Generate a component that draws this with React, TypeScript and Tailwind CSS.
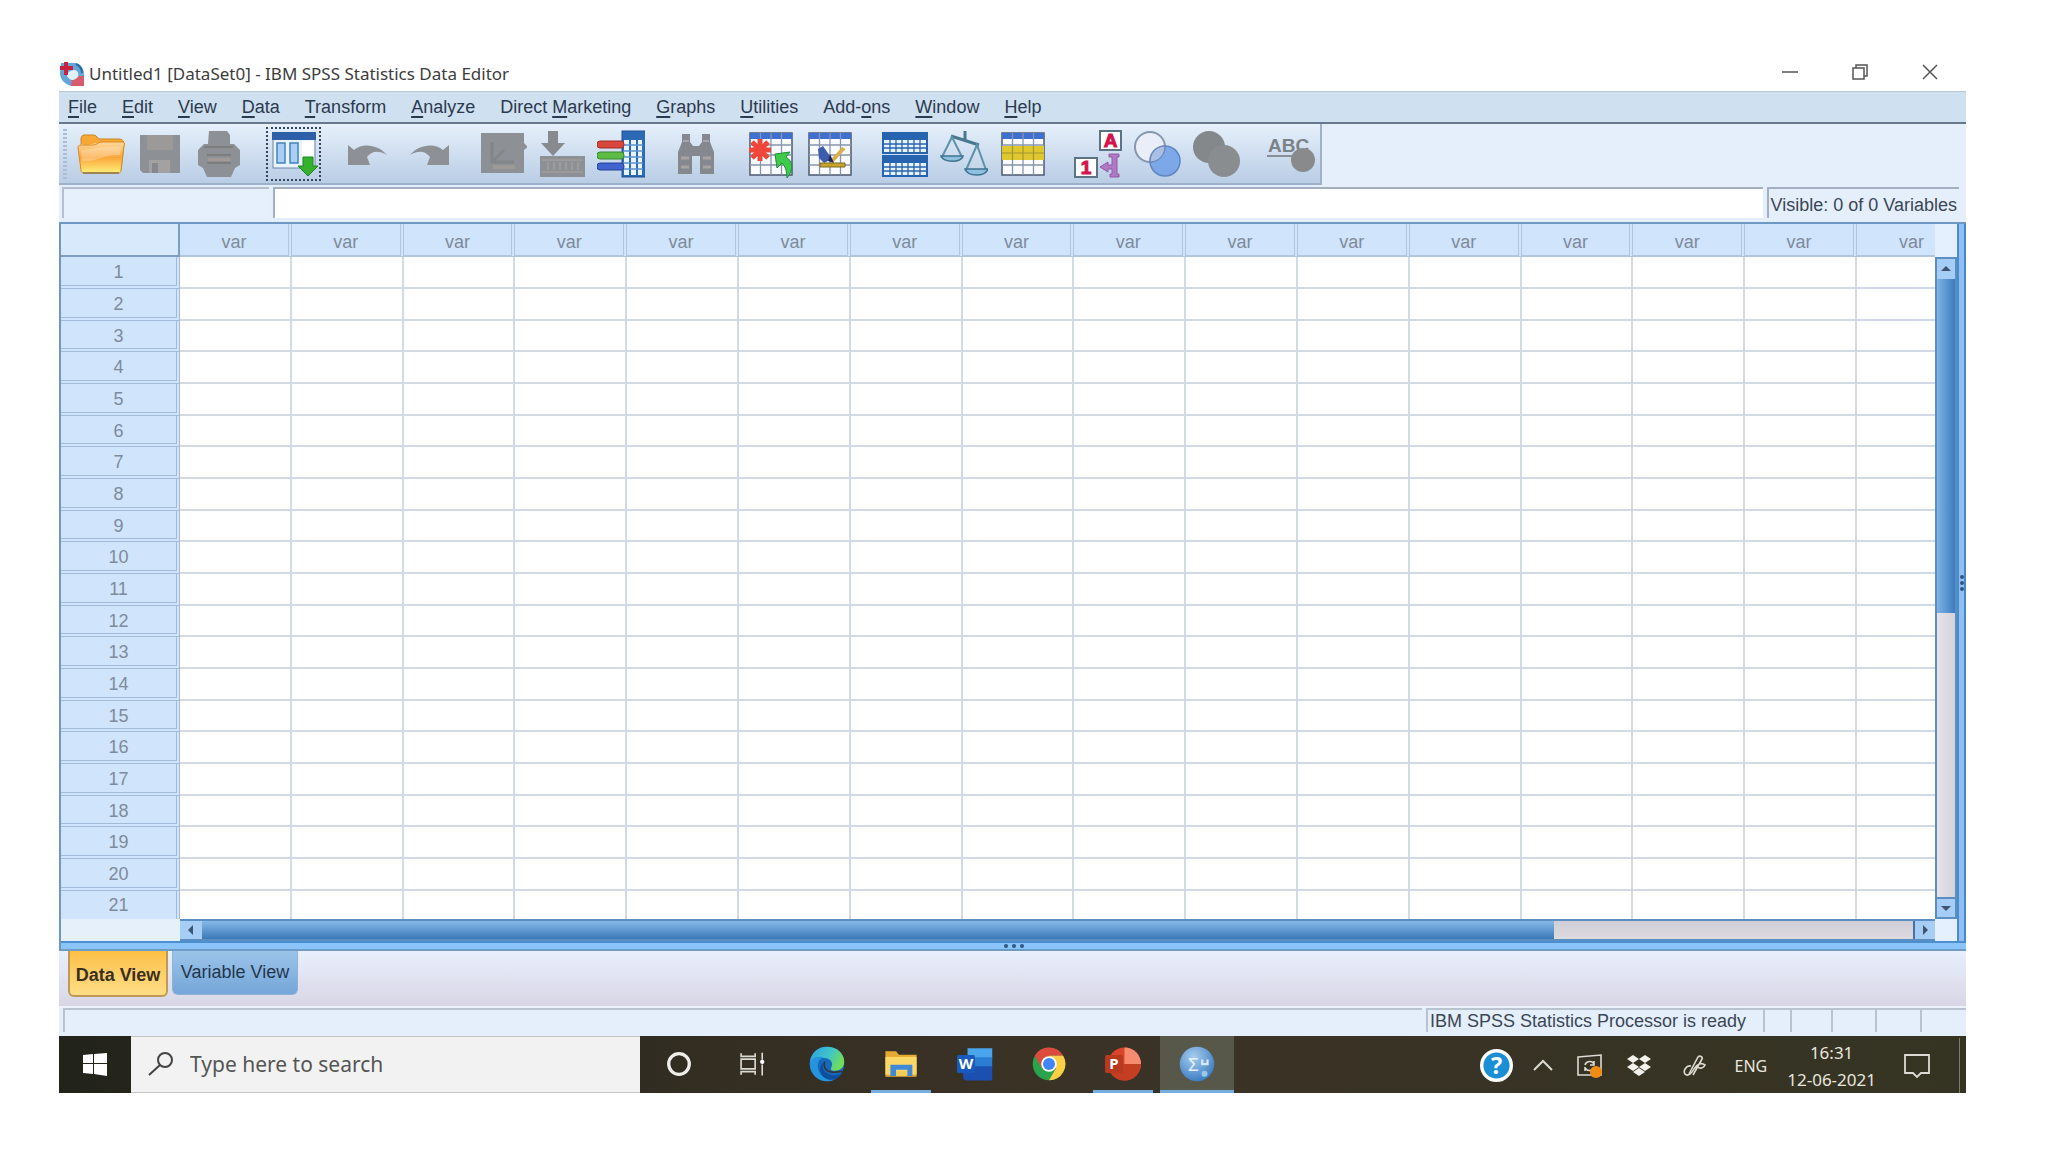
import type { ReactNode } from 'react'

const menus: [string, string, string][] = [
  ['', 'F', 'ile'],
  ['', 'E', 'dit'],
  ['', 'V', 'iew'],
  ['', 'D', 'ata'],
  ['', 'T', 'ransform'],
  ['', 'A', 'nalyze'],
  ['Direct ', 'M', 'arketing'],
  ['', 'G', 'raphs'],
  ['', 'U', 'tilities'],
  ['Add-', 'o', 'ns'],
  ['', 'W', 'indow'],
  ['', 'H', 'elp'],
]

const columns = Array.from({ length: 16 }, (_, i) => i)
const rows = Array.from({ length: 21 }, (_, i) => i + 1)

function Icon({ children, size = 48 }: { children: ReactNode; size?: number }) {
  return (
    <svg width={size} height={size} viewBox="0 0 48 48" aria-hidden="true">
      {children}
    </svg>
  )
}

// Small spreadsheet with a blue header strip, shared by several toolbar icons
function Sheet() {
  return (
    <>
      <rect x="3" y="3" width="42" height="42" fill="#fbfcff" stroke="#4d5a70" strokeWidth="1.5" />
      <rect x="3" y="3" width="42" height="6" fill="#3f6fd0" />
      <path d="M13.5 3v42M24 3v42M34.5 3v42M3 15h42M3 25h42M3 35h42" stroke="#8794ad" strokeWidth="1.3" />
    </>
  )
}

const GRAY = '#8d9196'

const icons: Record<string, ReactNode> = {
  open: (
    <>
      <path d="M4 9c0-2 1-4 3-4h10c3 0 3 4 6 4h19c3 0 5 2 5 5l-3 26H5z" fill="#f7a834" stroke="#c98526" />
      <path d="M4 14c8 3 14-2 22-1l19-1-1 8H4z" fill="#fde3bd" />
      <path d="M1 18c0-2 1-3 3-3h12c4 0 5-3 9-3h20c2 0 3 1 2 4l-3 24c0 2-1 3-3 3H8c-3 0-4-1-4-3z" fill="url(#folder)" stroke="#d98a1e" />
      <path d="M4 20c15-1 18-4 40-3l-1 8C28 24 19 32 5 31z" fill="#fff" opacity=".25" />
      <path d="M6 43h36" stroke="#8a7448" strokeWidth="1.5" />
    </>
  ),
  save: (
    <>
      <path d="M4 5h40v38H7l-3-3z" fill={GRAY} />
      <path d="M11 5h26v15H11z" fill="#9b9a99" />
      <path d="M13 30h21v13H13z" fill="#a3a2a1" />
      <path d="M16 33h6v10h-6z" fill="#85898e" />
    </>
  ),
  print: (
    <>
      <path d="M14 1h18l3 4v9h4l6 6v15l-5 3-4 9H12l-4-9-5-3V20l6-6h4z" fill={GRAY} />
      <path d="M9 17h29M12 25h24M12 33h24" stroke="#7e7d7d" strokeWidth="2" />
      <path d="M13 28h22v3H13z" fill="#a29a96" />
    </>
  ),
  recall: (
    <>
      <rect x="3" y="3" width="42" height="35" fill="#e9f3fd" stroke="#6d83a5" />
      <rect x="2" y="2" width="44" height="8" fill="#2f5fa8" />
      <rect x="7" y="13" width="8" height="20" fill="#a9d0f4" stroke="#4483bd" strokeWidth="1.5" />
      <rect x="20" y="13" width="8" height="20" fill="#a9d0f4" stroke="#4483bd" strokeWidth="1.5" />
      <rect x="32" y="11" width="12" height="16" fill="#fff" />
      <path d="M33 27h10v9h5L38 46 28 36h5z" fill="#35b12c" stroke="#1e8220" />
    </>
  ),
  undo: <path d="M3 15l6 5c9-8 25-5 33 5-9-5-15-4-20 2l3 8H3z" fill={GRAY} />,
  redo: <path d="M45 15l-6 5c-9-8-25-5-33 5 9-5 15-4 20 2l-3 8h22z" fill={GRAY} />,
  gotoCase: (
    <>
      <path d="M2 3h43v10l4 4-4 3v23H2z" fill={GRAY} />
      <path d="M13 12v20h22M13 32l12-12" stroke="#82868a" strokeWidth="3" fill="none" />
      <path d="M14 35h22v4H14z" fill="#9d9995" />
    </>
  ),
  gotoVar: (
    <>
      <path d="M10 1h10v12h7L15 26 3 13h7z" fill="#878b90" />
      <path d="M2 26h45v21H2z" fill={GRAY} />
      <path d="M4 30h41M4 42h41M10 32v8M16 32v8M22 32v8M28 32v8M34 32v8M40 32v8" stroke="#a29f9c" strokeWidth="1.6" />
    </>
  ),
  variables: (
    <>
      <rect x="25" y="1" width="24" height="46" fill="#2d6ab5" stroke="#1f4f95" />
      <path d="M27 10h5v35h-5zM34 10h5v35h-5zM41 10h4v35h-4z" fill="#eaf4ff" />
      <path d="M26 15h20M26 21h20M26 27h20M26 33h20M26 39h20" stroke="#5d91cd" strokeWidth="1.5" />
      <rect x="0" y="11" width="27" height="7" rx="3" fill="#d9473c" stroke="#a22d2a" />
      <rect x="0" y="22" width="27" height="7" rx="3" fill="#5dbd43" stroke="#39852c" />
      <rect x="0" y="33" width="27" height="7" rx="3" fill="#3f63cf" stroke="#27409a" />
    </>
  ),
  find: (
    <>
      <path d="M10 4h8v8l3 4h6l3-4V4h8v8l4 10v22H28V26h-8v18H6V22l4-10z" fill="#85898f" />
      <path d="M9 28h8M31 28h8M9 37h8M31 37h8" stroke="#a7a3a0" strokeWidth="3" />
      <path d="M11 11h6M31 11h6" stroke="#a4a6a9" strokeWidth="2" />
    </>
  ),
  insertCase: (
    <>
      <Sheet />
      <path d="M13 9v22M5 12l16 16M21 12L5 28M2 20h22" stroke="#f0463a" strokeWidth="5" />
      <path d="M28 24l15-2-4 5c7 4 8 13 1 21 0-7-2-12-5-15l-5 5z" fill="#3ecb4c" stroke="#1e9033" />
    </>
  ),
  insertVar: (
    <>
      <Sheet />
      <path d="M12 19l5-3 9 13-8 4-5-5z" fill="#3c5cae" />
      <path d="M38 18l-13 14" stroke="#d9b04a" strokeWidth="4" />
      <path d="M24 24l4 9-6-2z" fill="#1d2c58" />
      <path d="M14 33h25v4H14z" fill="#c7a42b" stroke="#7d6a24" />
    </>
  ),
  split: (
    <>
      <path d="M1 2h46v22H1zM1 25h46v22H1z" fill="#2764b0" />
      <path d="M3 10h42v12H3zM3 33h42v12H3z" fill="#e8f2ff" />
      <path d="M3 14h42M3 18h42M3 37h42M3 41h42M9 10v12M15 10v12M21 10v12M27 10v12M33 10v12M39 10v12M9 33v12M15 33v12M21 33v12M27 33v12M33 33v12M39 33v12" stroke="#2764b0" strokeWidth="1.3" />
    </>
  ),
  weight: (
    <>
      <path d="M11 6l28 9M25 1v10" stroke="#48788f" strokeWidth="3" />
      <path d="M12 7L2 27h20zM37 15L26 40h20z" fill="none" stroke="#5f91aa" strokeWidth="2" />
      <path d="M1 26h22c-2 7-19 7-22 0zM25 39h23c-3 8-20 8-23 0z" fill="#8fc0df" stroke="#3c7390" strokeWidth="1.5" />
    </>
  ),
  select: (
    <>
      <Sheet />
      <path d="M3 16h42v14H3z" fill="#dfc72e" />
      <path d="M13.5 16v14M24 16v14M34.5 16v14M3 23h42" stroke="#a39433" strokeWidth="1.2" />
    </>
  ),
  labels: (
    <>
      <rect x="26" y="1" width="21" height="19" fill="#fff" stroke="#5c7383" strokeWidth="2" />
      <text x="36.500" y="17" textAnchor="middle" fontSize="19" fontWeight="700" fill="#d4124c" stroke="#d4124c" fontFamily="Liberation Sans, sans-serif">A</text>
      <rect x="1" y="28" width="22" height="19" fill="#fff" stroke="#5c7383" strokeWidth="2" />
      <text x="12" y="44" textAnchor="middle" fontSize="19" fontWeight="700" fill="#d4124c" stroke="#d4124c" fontFamily="Liberation Sans, sans-serif">1</text>
      <path d="M26 37l8-5v3h4v-8h-3v-3h10v3h-2v17h2v3h-9v-3h2v-5h-4v3z" fill="#b178c4" stroke="#915aa6" />
    </>
  ),
  sets: (
    <>
      <circle cx="17" cy="17" r="15" fill="#e9eef8" stroke="#8596ad" strokeWidth="2" />
      <circle cx="32" cy="31" r="15" fill="#6f9fe8" fillOpacity=".85" stroke="#5f86c0" strokeWidth="1.5" />
      <path d="M31.800 16a15 15 0 0 1-14.600 16A15 15 0 0 1 31.800 16z" fill="#a9bfe6" stroke="#6b83ad" />
    </>
  ),
  showAll: (
    <>
      <circle cx="17" cy="17" r="16" fill="#85888b" />
      <circle cx="32" cy="31" r="16" fill="#8a8d90" />
    </>
  ),
  spell: (
    <>
      <text x="1" y="22" fontSize="19" fontWeight="700" fill="#7c8188" fontFamily="Liberation Sans, sans-serif">ABC</text>
      <path d="M0 26h25" stroke="#8a8f95" strokeWidth="2" />
      <circle cx="36" cy="30" r="12" fill="#888a8b" />
    </>
  ),
}

const toolGroups = [
  ['open', 'save', 'print'],
  ['recall'],
  ['undo', 'redo'],
  ['gotoCase', 'gotoVar', 'variables'],
  ['find'],
  ['insertCase', 'insertVar'],
  ['split', 'weight', 'select'],
  ['labels', 'sets', 'showAll'],
  ['spell'],
]

function TitleBar() {
  return (
    <header className="flex h-[35px] items-center font-['Noto_Sans',sans-serif] text-[#3c3c3c]">
      <svg width="26" height="26" viewBox="0 0 26 26" aria-hidden="true" className="shrink-0">
        <path d="M2 2h14c6 1 9 5 9 12v11H12C5 23 1 18 1 12z" fill="#62a5d6" />
        <path d="M13 15h12v10H12z" fill="#d95b70" />
        <path d="M8 15c0-4 4-6 8-6 3 1 4 4 3 7-4 4-8 4-11-1z" fill="#dff2fa" />
        <path d="M7 1v13M1 7h13" stroke="#c8203f" strokeWidth="4" />
        <path d="M17 3c4 2 6 5 6 9" stroke="#2b6aa8" strokeWidth="2" fill="none" />
      </svg>
      <h1 className="ml-1 grow whitespace-nowrap text-[17px]">Untitled1 [DataSet0] - IBM SPSS Statistics Data Editor</h1>
      <div className="flex gap-[38px] pr-5 pb-1">
        <button aria-label="Minimize" className="flex h-8 w-8 items-center justify-center">
          <svg width="16" height="16" viewBox="0 0 16 16" fill="none" stroke="#555" strokeWidth="1.5"><path d="M0 8h16" /></svg>
        </button>
        <button aria-label="Restore" className="flex h-8 w-8 items-center justify-center">
          <svg width="16" height="16" viewBox="0 0 16 16" fill="none" stroke="#555" strokeWidth="1.5"><path d="M1 4h11v11H1zM4 4V1h11v11h-3" /></svg>
        </button>
        <button aria-label="Close" className="flex h-8 w-8 items-center justify-center">
          <svg width="16" height="16" viewBox="0 0 16 16" fill="none" stroke="#555" strokeWidth="1.5"><path d="M1 1l14 14M15 1L1 15" /></svg>
        </button>
      </div>
    </header>
  )
}

function ToolBar() {
  return (
    <div className="flex bg-[#e4effb]">
      <div className="flex h-[61px] items-center gap-4 border-r-2 border-b-2 border-[#9db1c8] bg-linear-to-b from-[#e6f0fb] to-[#b9cde5] pl-1">
        <span className="-mr-3 h-[50px] w-1 border-x-2 border-dotted border-[#a9bed6]" />
        {toolGroups.map((group) => (
          <div key={group[0]} className="flex">
            {group.map((name) => (
              <button key={name} aria-label={name} className="flex h-14 w-[59px] items-center justify-center">
                {name === 'recall' ? (
                  <span className="flex h-[54px] w-[55px] items-center justify-center border-2 border-dotted border-[#34455f]">
                    <Icon>{icons[name]}</Icon>
                  </span>
                ) : (
                  <Icon>{icons[name]}</Icon>
                )}
              </button>
            ))}
          </div>
        ))}
      </div>
    </div>
  )
}

function CellBar() {
  return (
    <div className="flex h-[37px] items-stretch gap-1 bg-[#e4effb] pt-[2px] pr-[7px] pb-1 pl-[3px] text-[18px] text-[#3b4656]">
      <output aria-label="Cell" className="w-[207px] border-t-2 border-l-2 border-[#b3bfce] bg-[#e5f0fc]" />
      <input aria-label="Cell value" className="min-w-0 grow border-t-2 border-l-2 border-[#a4b0c0] bg-white px-2 outline-none" />
      <div className="flex items-center whitespace-nowrap border-t-2 border-l-2 border-[#a4b0c0] px-0.5 pt-1">Visible: 0 of 0 Variables</div>
    </div>
  )
}

function DataGrid() {
  return (
    <table className="w-full table-fixed border-separate border-spacing-0 text-[18px] leading-[22px] text-[#7e8b9c]">
      <colgroup>
        <col className="w-[119px]" />
        {columns.map((c) => (
          <col key={c} className={c === 15 ? 'w-[78px]' : ''} />
        ))}
      </colgroup>
      <thead>
        <tr className="h-[33px]">
          <td className="border-r-2 border-b-2 border-[#7f9dbf] bg-[#d8e9fc]" />
          {columns.map((c) => (
            <th
              key={c}
              scope="col"
              className={
                c === 15
                  ? 'overflow-hidden border-b-2 border-[#b0c6df] bg-[#d0e4fb] p-0 pt-1 pl-[31px] text-center font-normal'
                  : 'border-r-4 border-b-2 border-double border-[#b0c6df] bg-[#d0e4fb] p-0 pt-1 text-center font-normal'
              }
            >
              var
            </th>
          ))}
        </tr>
      </thead>
      <tbody>
        {rows.map((n, i) => (
          <tr key={n} className={n === 21 ? 'h-[28px]' : i % 3 === 2 ? 'h-[31px]' : 'h-[32px]'}>
            <th
              scope="row"
              className={
                n === 21
                  ? 'border-r-4 border-double border-[#a2bbd8] bg-[#d0e4fb] p-0 text-center font-normal'
                  : 'border-r-4 border-b-4 border-double border-[#a2bbd8] bg-[#d0e4fb] p-0 pt-0.5 text-center font-normal'
              }
            >
              {n}
            </th>
            {columns.map((c) => (
              <td
                key={c}
                className={
                  c === 15
                    ? n === 21
                      ? 'bg-white p-0'
                      : 'border-b-2 border-[#d0dae6] bg-white p-0'
                    : n === 21
                      ? 'border-r-2 border-[#d3dae4] bg-white p-0'
                      : 'border-r-2 border-b-2 border-[#d3dae4] bg-white p-0'
                }
              />
            ))}
          </tr>
        ))}
      </tbody>
    </table>
  )
}

function Arrow({ d }: { d: string }) {
  return (
    <svg width="12" height="12" viewBox="0 0 12 12" fill="#3f556f" aria-hidden="true">
      <path d={d} />
    </svg>
  )
}

function Dots() {
  return (
    <>
      <i className="h-1 w-1 rounded-full bg-[#2f5680]" />
      <i className="h-1 w-1 rounded-full bg-[#2f5680]" />
      <i className="h-1 w-1 rounded-full bg-[#2f5680]" />
    </>
  )
}

function Editor() {
  return (
    <main className="border-t-2 border-l-2 border-[#6d98c4]">
      <div className="flex">
        <div className="min-w-0 grow">
          <DataGrid />
          <div className="flex h-[22px]">
            <div className="w-[119px] shrink-0 bg-[#e6f0fa]" />
            <div className="flex grow border-y-2 border-[#5b8fc2]">
              <button aria-label="Scroll left" className="flex w-[22px] items-center justify-center bg-[#a5cdf5]">
                <Arrow d="M8 1v10L3 6z" />
              </button>
              <div className="flex grow bg-linear-to-b from-[#cfcdd6] to-[#dddbe0]">
                <div className="w-[79%] bg-linear-to-b from-[#85b9ea] to-[#3b79b6]" />
              </div>
              <button aria-label="Scroll right" className="flex w-[22px] items-center justify-center border-l-2 border-[#4c71a0] bg-[#a5cdf5]">
                <Arrow d="M4 1v10l5-5z" />
              </button>
            </div>
          </div>
        </div>
        <div className="flex w-[22px] shrink-0 flex-col">
          <div className="h-[33px] bg-[#e4f0fd]" />
          <div className="flex grow flex-col border-x-2 border-[#5b8fc2]">
            <button aria-label="Scroll up" className="flex h-[22px] items-center justify-center border-t-2 border-[#5b8fc2] bg-[#a5cdf5]">
              <Arrow d="M1 8h10L6 3z" />
            </button>
            <div className="flex grow flex-col bg-linear-to-r from-[#e6e4ea] to-[#d5d3da]">
              <div className="h-[54%] bg-linear-to-r from-[#7db4e8] to-[#3b7cbd]" />
            </div>
            <button aria-label="Scroll down" className="flex h-[22px] items-center justify-center border-y-2 border-[#5b8fc2] bg-[#a5cdf5]">
              <Arrow d="M1 4h10L6 9z" />
            </button>
          </div>
          <div className="h-[22px] bg-[#e4f0fd]" />
        </div>
        <div className="flex w-[9px] shrink-0 flex-col items-end justify-center gap-0.5 border-r-2 border-l-2 border-l-[#4d8ccb] border-r-[#4a87c9] bg-[#8fc0f5]">
          <Dots />
        </div>
      </div>
      <div className="flex h-[10px] items-center justify-center gap-1 border-y-2 border-t-[#4d8fce] border-b-[#6d9cc9] bg-[#8ac4fa]">
        <Dots />
      </div>
    </main>
  )
}

function TaskButton({ label, active, running, children }: { label: string; active?: boolean; running?: boolean; children: ReactNode }) {
  return (
    <button aria-label={label} className={`flex w-[74px] flex-col items-center ${active ? 'bg-[#58584a]' : ''}`}>
      <span className="flex grow items-center pt-0.5">{children}</span>
      <span className={`h-[3px] ${active ? 'w-full bg-[#76aede]' : running ? 'w-[60px] bg-[#76aede]' : 'w-full'}`} />
    </button>
  )
}

function TaskBar() {
  return (
    <footer className="flex h-[57px] bg-linear-to-r from-[#22231a] via-[#3b3226] to-[#353423] font-['Noto_Sans',sans-serif] text-[#e8e6df]">
      <button aria-label="Start" className="flex w-[72px] shrink-0 items-center justify-center">
        <svg width="26" height="26" viewBox="0 0 26 26" fill="#fff"><path d="M1 3l10-1v9H1zM12 2l13-1v10H12zM1 12h10v10L1 21zM12 12h13v12l-13-2z" /></svg>
      </button>
      <label className="flex w-[509px] shrink-0 items-center gap-4 border-t border-b border-[#c4c4c4] bg-[#f2f2f2] pl-[17px] text-[#555]">
        <svg width="26" height="26" viewBox="0 0 26 26" fill="none" stroke="#444" strokeWidth="2" aria-hidden="true" className="shrink-0">
          <circle cx="17" cy="8" r="7" />
          <path d="M12 13L1 23" />
        </svg>
        <input aria-label="Search" placeholder="Type here to search" className="min-w-0 grow bg-transparent text-[21px] outline-none placeholder:text-[#555]" />
      </label>
      <div className="flex grow pl-0.5">
        <TaskButton label="Cortana">
          <Icon size={26}><circle cx="24" cy="24" r="19" fill="none" stroke="#efede8" strokeWidth="6" /></Icon>
        </TaskButton>
        <TaskButton label="Task View">
          <Icon size={26}>
            <path d="M2 4v6h26V4M2 44v-6h26v6M2 15h26v18H2zM41 3v13M41 25v20" fill="none" stroke="#dcdad3" strokeWidth="3" />
            <circle cx="41" cy="20" r="4" fill="#fff" />
          </Icon>
        </TaskButton>
        <TaskButton label="Microsoft Edge">
          <Icon size={36}>
            <circle cx="24" cy="24" r="23" fill="#1668bd" />
            <path d="M1 23C2 9 12 1 24 1c14 0 23 9 23 20 0 8-6 12-13 12-4 0-6-2-4-5 3-6-2-12-10-12C10 16 3 19 1 23z" fill="url(#edge)" />
            <path d="M1 24c1-7 9-11 18-9-7 3-9 11-6 18 4 9 13 14 22 11C22 52 2 44 1 24z" fill="#2494df" />
            <path d="M20 21c-5 8 1 18 14 18 4 0 8-1 11-4-6 11-20 13-27 5-5-6-4-14 2-19z" fill="#0e4f9e" />
            <path d="M21 21c-3 8 3 14 12 14l12-1" stroke="#38312a" strokeWidth="2" fill="none" />
          </Icon>
        </TaskButton>
        <TaskButton label="File Explorer" running>
          <Icon size={34}>
            <path d="M2 6h15l4 5h25v31H2z" fill="#e5aa32" />
            <path d="M2 14h44v25H2z" fill="#fbd768" />
            <path d="M9 25h31v16h-7v-9H17v9H9z" fill="#3f8ad8" />
            <path d="M17 34h15v7H17z" fill="#f4cb54" />
          </Icon>
        </TaskButton>
        <TaskButton label="Word">
          <Icon size={36}>
            <path d="M14 3h33v14H14z" fill="#4ba5ec" />
            <path d="M14 15h33v13H14z" fill="#2b7cd3" />
            <path d="M8 27h39v17c0 1-1 2-2 2H13c-3 0-5-2-5-5z" fill="#1b4fb0" />
            <rect x="0" y="12" width="24" height="24" rx="2" fill="#185abd" />
            <text x="12" y="31" textAnchor="middle" fontSize="20" fontWeight="700" fill="#fff" fontFamily="Noto Sans, sans-serif">W</text>
          </Icon>
        </TaskButton>
        <TaskButton label="Chrome">
          <Icon size={34}>
            <circle cx="24" cy="24" r="23" fill="#2ba24c" />
            <path d="M4 12.500A23 23 0 0 1 44 12.500H24L14 30z" fill="#dd4b3e" />
            <path d="M44 12.500A23 23 0 0 1 24 47l10-17-10-17.500z" fill="#fcce45" />
            <circle cx="24" cy="24" r="11" fill="#fff" />
            <circle cx="24" cy="24" r="8.500" fill="#4285f4" />
          </Icon>
        </TaskButton>
        <TaskButton label="PowerPoint" running>
          <Icon size={36}>
            <circle cx="26" cy="24" r="22" fill="#d8452c" />
            <path d="M26 2a22 22 0 0 1 22 22H26z" fill="#f58b6f" />
            <path d="M4 24h44a22 22 0 0 1-44 0z" fill="#c43e24" />
            <rect x="0" y="12" width="24" height="24" rx="2" fill="#b83a20" />
            <text x="12" y="31" textAnchor="middle" fontSize="20" fontWeight="700" fill="#fff" fontFamily="Noto Sans, sans-serif">P</text>
          </Icon>
        </TaskButton>
        <TaskButton label="SPSS Statistics" active>
          <Icon size={36}>
            <circle cx="24" cy="24" r="23" fill="url(#globe)" />
            <text x="19" y="33" textAnchor="middle" fontSize="25" fill="#e4f1fc" fontFamily="Noto Sans, sans-serif">Σ</text>
            <circle cx="34" cy="37" r="4" fill="#9cc6ea" />
            <path d="M31 18v6h7v-6" stroke="#d7e9f8" strokeWidth="3" fill="none" />
          </Icon>
        </TaskButton>
      </div>
      <div className="flex shrink-0 items-center pt-0.5 text-[16px]">
        <button aria-label="Get help" className="mr-5">
          <Icon size={33}>
            <circle cx="24" cy="24" r="21.500" fill="#1a8fd6" stroke="#fff" strokeWidth="5" />
            <text x="24" y="36" textAnchor="middle" fontSize="34" fontWeight="700" fill="#fff" fontFamily="Noto Sans, sans-serif">?</text>
          </Icon>
        </button>
        <button aria-label="Show hidden icons" className="mr-6">
          <svg width="20" height="20" viewBox="0 0 20 20" fill="none" stroke="#dcdad3" strokeWidth="2"><path d="M1 14l9-9 9 9" /></svg>
        </button>
        <button aria-label="Sync" className="mr-6">
          <svg width="26" height="26" viewBox="0 0 26 26" fill="none" stroke="#dcdad3" strokeWidth="1.600">
            <path d="M1 4l23-2v20H1zM8 12c1-4 7-5 9-1M17 8v4h-4M17 14c-1 4-6 5-9 1M8 18v-4" />
            <circle cx="19" cy="19" r="6" fill="#f08c12" stroke="none" />
          </svg>
        </button>
        <button aria-label="Dropbox" className="mr-8">
          <svg width="24" height="22" viewBox="0 0 24 22" fill="#f3f1ec"><path d="M6 0l6 4-6 4-6-4zM18 0l6 4-6 4-6-4zM6 8l6 4-6 4-6-4zM18 8l6 4-6 4-6-4zM12 13l6 4-6 4-6-4z" /></svg>
        </button>
        <button aria-label="Windows Ink" className="mr-7">
          <svg width="24" height="24" viewBox="0 0 24 24" fill="none" stroke="#dcdad3" strokeWidth="1.600"><path d="M6 20L15 3c2-2 5 0 4 2l-9 16M8 12c-5-1-8 5-6 8 3 3 7-1 9-5 3-5 7-7 11-4-2 4-6 4-9 1" /></svg>
        </button>
        <span className="mr-5">ENG</span>
        <time className="mr-[28px] text-center text-[17px] leading-[27px]">
          16:31
          <br />
          12-06-2021
        </time>
        <button aria-label="Notifications" className="mr-[29px]">
          <svg width="26" height="26" viewBox="0 0 26 26" fill="none" stroke="#dcdad3" strokeWidth="1.800"><path d="M1 2h24v18h-8l-4 4-4-4H1z" /></svg>
        </button>
        <span className="mr-1.5 h-[55px] w-px bg-[#7d7b6c]" />
      </div>
    </footer>
  )
}

export default function App() {
  return (
    <div className="min-h-screen bg-white pt-14 pr-[82px] pb-14 pl-[59px] font-['Liberation_Sans',sans-serif]">
      <svg width="0" height="0" className="absolute" aria-hidden="true">
        <defs>
          <linearGradient id="folder" x1="0" y1="0" x2="0" y2="1">
            <stop offset="0" stopColor="#fdd9a0" />
            <stop offset=".5" stopColor="#fba63a" />
            <stop offset="1" stopColor="#fff07a" />
          </linearGradient>
          <linearGradient id="edge" x1="0" y1="0" x2="1" y2="0.400">
            <stop offset="0" stopColor="#2b9fe3" />
            <stop offset=".6" stopColor="#3fc5c9" />
            <stop offset="1" stopColor="#6fdc5c" />
          </linearGradient>
          <radialGradient id="globe" cx=".4" cy=".3" r=".7">
            <stop offset="0" stopColor="#a8cdee" />
            <stop offset="1" stopColor="#3f7fc4" />
          </radialGradient>
        </defs>
      </svg>
      <TitleBar />
      <nav className="flex h-[33px] items-center gap-[25px] border-t border-b-2 border-t-[#b9c6d3] border-b-[#66788c] bg-[#cfe0f1] pl-[9px] text-[18px] whitespace-nowrap text-[#2c3a4e]">
        {menus.map(([before, key, after]) => (
          <button key={key + after}>
            {before}
            <span className="underline decoration-2 underline-offset-3">{key}</span>
            {after}
          </button>
        ))}
      </nav>
      <ToolBar />
      <CellBar />
      <Editor />
      <div className="flex h-[55px] items-start gap-1 bg-linear-to-b from-[#e9effc] to-[#d8d6e5] pl-[9px] text-[18px]">
        <button className="h-[46px] w-[100px] rounded-b-md border-2 border-t-0 border-[#c09a55] bg-linear-to-b from-[#fdc045] to-[#fedd85] pt-1 font-bold whitespace-nowrap text-[#3a2f1c]">
          Data View
        </button>
        <button className="h-[44px] w-[126px] rounded-b-md border border-t-0 border-[#8fb2d6] bg-linear-to-b from-[#9cc4ea] to-[#74a6d8] whitespace-nowrap text-[#24364c]">
          Variable View
        </button>
      </div>
      <div className="flex h-[30px] items-stretch border-t-2 border-[#eef3fb] bg-[#e4effb] pb-1 pl-1 text-[18px] text-[#3b4656]">
        <div className="mr-1 grow border-t-2 border-l-2 border-[#b9c3d0]" />
        <div className="flex w-[337px] items-center border-t-2 border-l-2 border-[#b9c3d0] pl-0.5 whitespace-nowrap">
          IBM SPSS Statistics Processor is ready
        </div>
        <div className="w-[27px] border-t-2 border-l-2 border-[#b9c3d0]" />
        <div className="w-[41px] border-t-2 border-l-2 border-[#b9c3d0]" />
        <div className="w-[44px] border-t-2 border-l-2 border-[#b9c3d0]" />
        <div className="w-[45px] border-t-2 border-l-2 border-[#b9c3d0]" />
        <div className="w-[46px] border-t-2 border-l-2 border-[#b9c3d0]" />
      </div>
      <TaskBar />
    </div>
  )
}
